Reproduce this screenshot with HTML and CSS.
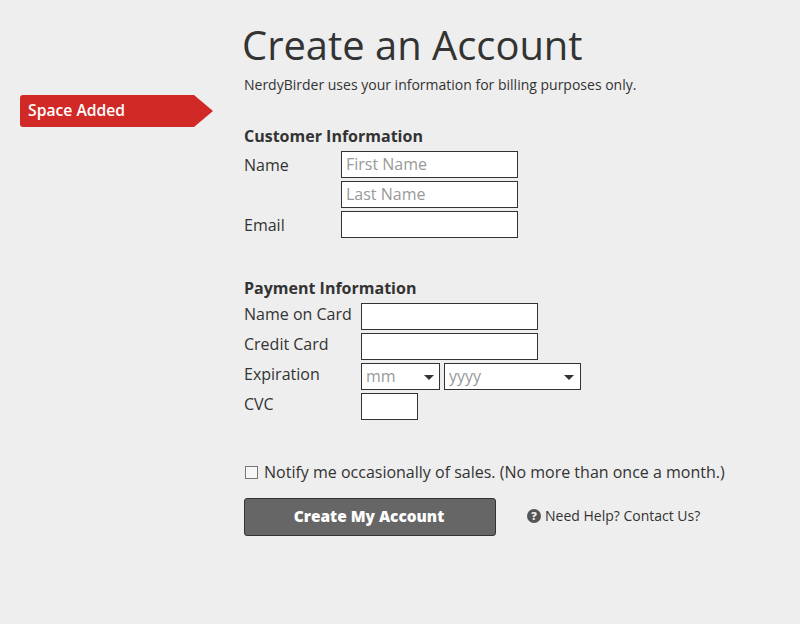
FILE: index.html
```html
<!DOCTYPE html>
<html lang="en">
<head>
    <meta charset="UTF-8">
    <title>Create an Account</title>
    <link rel="stylesheet" href="styles.css">
</head>
<body>
    <div class="page">
        <aside class="side">
            <div class="flag">Space Added</div>
        </aside>
        <main class="content">
            <h1>Create an Account</h1>
            <p class="intro">NerdyBirder uses your information for billing purposes only.</p>

            <form>
                <h2>Customer Information</h2>
                <div class="fields customer">
                    <label>Name</label>
                    <input type="text" placeholder="First Name">
                    <span></span>
                    <input type="text" placeholder="Last Name">
                    <label>Email</label>
                    <input type="text">
                </div>

                <h2 class="payment-head">Payment Information</h2>
                <div class="fields payment">
                    <label>Name on Card</label>
                    <input type="text">
                    <label>Credit Card</label>
                    <input type="text">
                    <label>Expiration</label>
                    <div class="expiry">
                        <div class="select month"><select><option>mm</option></select></div>
                        <div class="select year"><select><option>yyyy</option></select></div>
                    </div>
                    <label>CVC</label>
                    <input type="text" class="cvc">
                </div>

                <label class="notify">
                    <input type="checkbox">
                    Notify me occasionally of sales. (No more than once a month.)
                </label>

                <div class="actions">
                    <button type="submit">Create My Account</button>
                    <a class="help" href="#"><span class="help-icon">?</span>Need Help? Contact Us?</a>
                </div>
            </form>
        </main>
    </div>
</body>
</html>
```

FILE: styles.css
```css
* {
    box-sizing: border-box;
}
body {
    margin: 0;
    background: #eeeeee;
    color: #333;
    font-family: "Open Sans", sans-serif;
    font-size: 16px;
}
.page {
    display: flex;
    height: 624px;
    overflow: hidden;
}
.side {
    width: 244px;
    padding: 95px 0 0 20px;
}
.flag {
    width: 193px;
    height: 32px;
    padding-left: 8px;
    background: #d12926;
    color: #fff;
    font-size: 15.7px;
    font-weight: 600;
    line-height: 31px;
    clip-path: polygon(0 0, 174px 0, 100% 50%, 174px 100%, 0 100%);
    border-radius: 3px 0 0 3px;
}
.content {
    flex: 1;
}
h1 {
    margin: 18px 0 0 -2px;
    font-size: 39.9px;
    font-weight: 400;
    line-height: 54px;
}
.intro {
    margin: 3px 0 0;
    font-size: 14px;
    line-height: 19px;
}
h2 {
    margin: 31px 0 0;
    font-size: 16px;
    font-weight: 700;
    line-height: 22px;
}
.payment-head {
    margin-top: 39px;
}
.fields {
    display: grid;
    grid-auto-rows: 27px;
    gap: 3px 0;
    margin-top: 4px;
}
.customer {
    grid-template-columns: 97px 177px;
}
.customer label {
    line-height: 28px;
}
.payment {
    grid-template-columns: 117px 177px;
}
.payment label {
    line-height: 22px;
}
input[type="text"],
select {
    display: block;
    width: 177px;
    height: 27px;
    padding: 0 4px 2px;
    border: 1px solid #333;
    border-radius: 0;
    background: #fff;
    font-family: inherit;
    font-size: 16px;
    color: #333;
}
input::placeholder {
    color: #999;
    opacity: 1;
}
.expiry {
    display: flex;
    gap: 4px;
}
.select {
    position: relative;
}
.select select {
    appearance: none;
    color: #999;
}
.select::after {
    content: "";
    position: absolute;
    top: 12px;
    right: 6px;
    border-left: 5px solid transparent;
    border-right: 5px solid transparent;
    border-top: 5px solid #333;
}
.year::after {
    right: 7px;
}
.month select {
    width: 79px;
}
.year select {
    width: 137px;
}
input.cvc {
    width: 57px;
}
.notify {
    display: flex;
    align-items: center;
    gap: 6px;
    margin-top: 41px;
    line-height: 22px;
}
.notify input {
    appearance: none;
    width: 13px;
    height: 13px;
    margin: 0 0 0 1px;
    border: 1px solid #777;
    background: #f6f6f6;
}
.actions {
    display: flex;
    align-items: center;
    margin-top: 15px;
}
button {
    width: 252px;
    height: 38px;
    padding: 0 2px 2px 0;
    border: 1px solid #333;
    border-radius: 3px;
    background: #666;
    color: #fff;
    font-family: inherit;
    font-size: 15.4px;
    font-weight: 800;
}
.help {
    display: flex;
    align-items: center;
    margin: 0 0 3px 31px;
    color: #333;
    font-size: 14px;
    text-decoration: none;
}
.help-icon {
    width: 14px;
    height: 14px;
    margin-right: 4px;
    border-radius: 50%;
    background: #555;
    color: #eee;
    font-size: 11px;
    font-weight: 800;
    line-height: 14px;
    text-align: center;
}
```
